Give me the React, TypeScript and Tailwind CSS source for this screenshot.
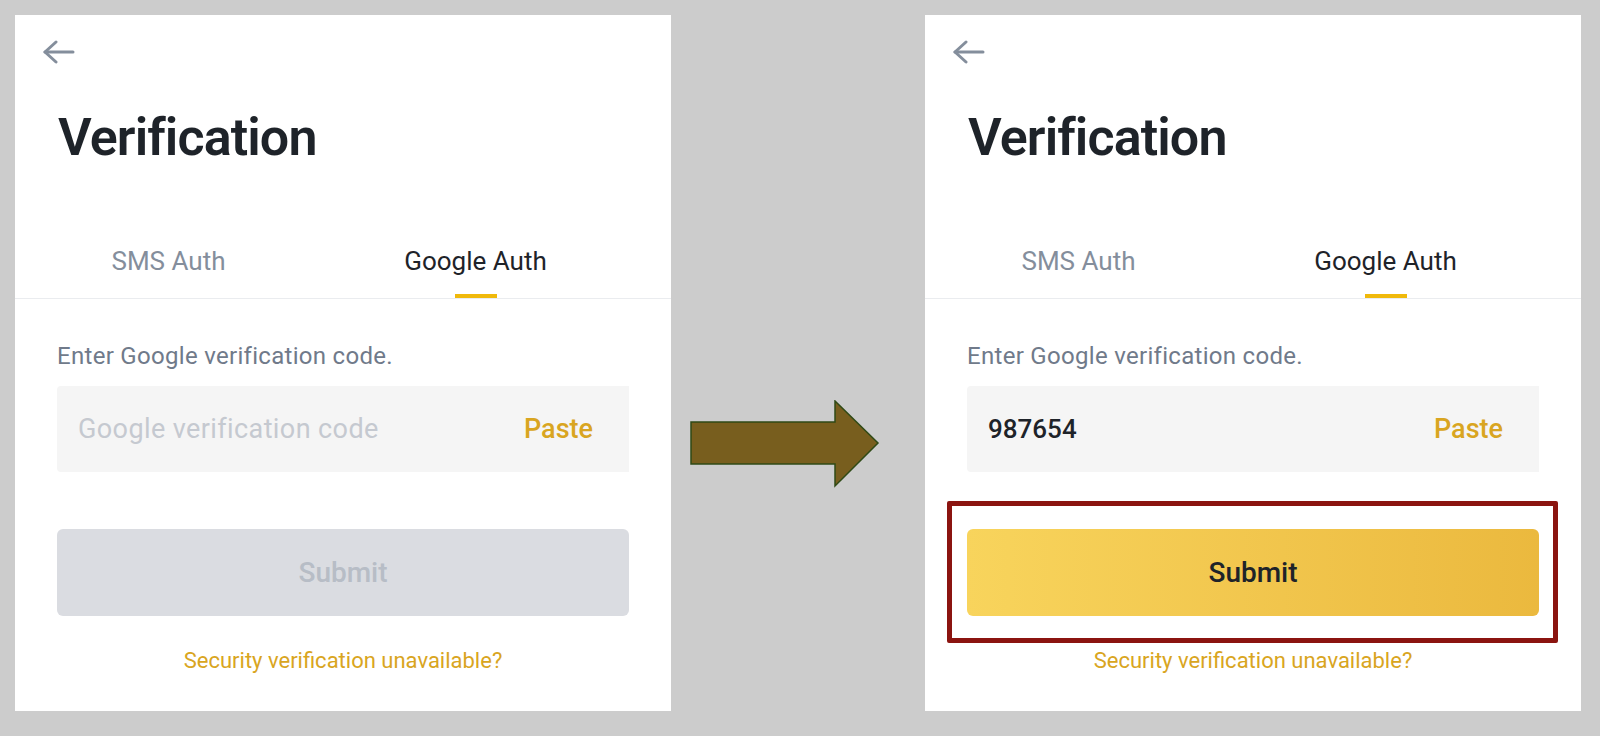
import React from 'react';

const font = { fontFamily: 'Roboto, "Noto Sans", sans-serif' };

const BackArrow = () => (
  <svg width="32" height="24" viewBox="0 0 32 24" fill="none" stroke="#848e9c" strokeWidth="3" strokeLinecap="round" strokeLinejoin="round">
    <path d="M2 12h28" />
    <path d="M13 2 2 12l11 10" />
  </svg>
);

const VerifyCard = ({ filled }: { filled: boolean }) => {
  return (
    <div className="relative w-[656px] h-[696px] bg-white flex flex-col">
      {/* Header */}
      <div className="pt-[25px] pl-[28px]">
        <BackArrow />
      </div>
      <h1 className="mt-[42px] pl-[43px] text-[52px] leading-[64px] font-semibold text-[#1e2329] tracking-[-0.9px]">
        Verification
      </h1>

      {/* Tabs */}
      <div className="mt-[75px] flex border-b border-[#eaecef]">
        <div className="w-[307px] flex flex-col items-center">
          <span className="text-[26px] leading-[32px] text-[#848e9c]">SMS Auth</span>
          <div className="mt-[17px] h-[4px]" />
        </div>
        <div className="w-[307px] flex flex-col items-center">
          <span className="text-[26px] leading-[32px] text-[#1e2329]">Google Auth</span>
          <div className="mt-[17px] h-[4px] w-[42px] bg-[#f0b90b]" />
        </div>
      </div>

      {/* Form */}
      <div className="px-[42px] flex flex-col">
        <p className="mt-[42px] text-[24px] leading-[30px] tracking-[0.3px] text-[#707a8a]">Enter Google verification code.</p>
        <div className="mt-[15px] h-[86px] bg-[#f5f5f5] rounded-l-[4px] flex items-center justify-between pl-[21px] pr-[36px]">
          {filled ? (
            <span className="text-[26px] font-medium text-[#1e2329]">987654</span>
          ) : (
            <span className="text-[27px] tracking-[0.4px] text-[#c5c9d0]">Google verification code</span>
          )}
          <span className="text-[27px] font-medium text-[#d9a521]">Paste</span>
        </div>
        <button
          className={
            filled
              ? 'mt-[57px] h-[87px] rounded-[6px] bg-gradient-to-r from-[#f8d45c] to-[#ebb93e] text-[28px] font-medium text-[#1e2329]'
              : 'mt-[57px] h-[87px] rounded-[6px] bg-[#dadce1] text-[28px] font-medium text-[#b7bdc6]'
          }
          style={font}
        >
          Submit
        </button>
        <p className="mt-[32px] text-center text-[22px] leading-[26px] text-[#d9a521]">Security verification unavailable?</p>
      </div>

      {filled && (
        <div className="absolute left-[22px] top-[486px] w-[611px] h-[142px] border-[5px] border-[#8b1410] rounded-[2px]" />
      )}
    </div>
  );
};

const App = () => {
  return (
    <div className="w-[1600px] h-[736px] bg-[#cccccc] flex pt-[15px] pl-[15px]" style={font}>
      <VerifyCard filled={false} />
      <div className="w-[254px] pt-[385px] pl-[19px]">
        <svg width="190" height="88" viewBox="0 0 190 88">
          <path d="M1 22H145V1L188 43 145 86V64H1Z" fill="#785e1e" stroke="#2f4a16" strokeWidth="1.5" />
        </svg>
      </div>
      <VerifyCard filled={true} />
    </div>
  );
};

export default App;
